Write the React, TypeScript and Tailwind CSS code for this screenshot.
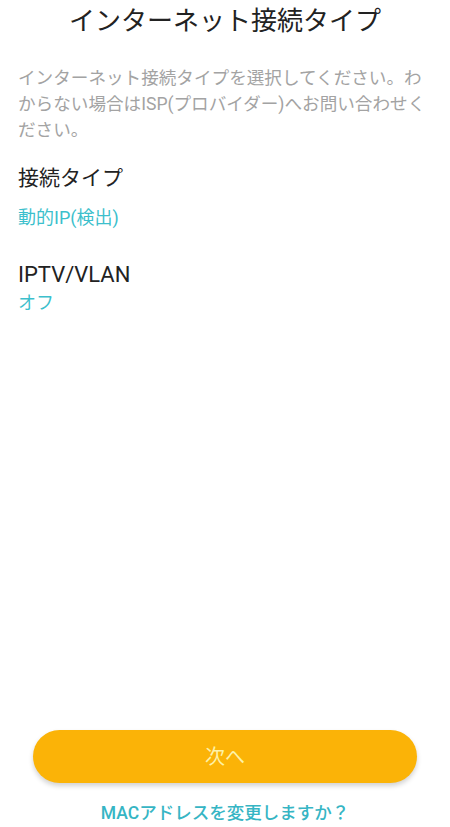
export default function App() {
  return (
    <div
      className="flex min-h-[827px] w-[450px] flex-col bg-white"
      style={{ fontFamily: 'Roboto, "Noto Sans CJK JP", "Noto Sans", sans-serif' }}
    >
      <h1 className="mt-0 text-center text-[26px] leading-[42px] font-normal text-[#222]">
        インターネット接続タイプ
      </h1>

      <p className="mt-[23px] px-[18px] text-[17.6px] leading-[26px] text-[#a3a3a3]">
        インターネット接続タイプを選択してください。わからない場合はISP(プロバイダー)へお問い合わせください。
      </p>

      <div className="mt-[19px] px-[18px]">
        <div className="text-[21px] leading-[32px] text-[#222]">接続タイプ</div>
        <div className="mt-[11px] text-[18px] leading-[26px] text-[#3cbfcc]">動的IP(検出)</div>
      </div>

      <div className="mt-[29px] px-[18px]">
        <div className="text-[22px] leading-[30px] text-[#222]">IPTV/VLAN</div>
        <div className="text-[18px] leading-[26px] text-[#3cbfcc]">オフ</div>
      </div>

      <div className="mt-auto flex flex-col items-center">
        <button className="h-[53px] w-[384px] rounded-full bg-[#fbb307] text-[20px] text-[#fdf2a8] shadow-[0_3px_5px_rgba(0,0,0,0.18)]">
          次へ
        </button>
        <div className="mt-[16px] text-[17.5px] leading-[28px] font-medium text-[#36b5c4]">
          MACアドレスを変更しますか？
        </div>
      </div>
    </div>
  );
}
